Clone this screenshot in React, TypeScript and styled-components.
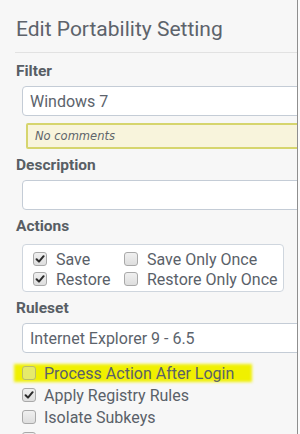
import React from "react";
import styled, { createGlobalStyle } from "styled-components";

const GlobalStyle = createGlobalStyle`
  html, body {
    margin: 0;
    padding: 0;
    background: #fbfbfb;
  }
  body {
    font-family: Roboto, "Liberation Sans", sans-serif;
  }
`;

interface iCheck {
  checked?: boolean;
}

const Check: React.FC<iCheck> = ({ checked }) => {
  return (
    <Box>
      {checked ? (
        <svg width="10" height="10" viewBox="0 0 10 10">
          <path
            d="M1.6 5.2 L4 7.6 L8.6 2.2"
            fill="none"
            stroke="#2b2b2b"
            strokeWidth="2"
            strokeLinecap="round"
            strokeLinejoin="round"
          />
        </svg>
      ) : null}
    </Box>
  );
};

const App: React.FC = () => {
  return (
    <>
      <GlobalStyle />
      <Panel>
        <Title>Edit Portability Setting</Title>
        <Rule />

        <Label style={{ marginTop: 10 }}>Filter</Label>
        <Field>Windows 7</Field>
        <Comment>No comments</Comment>

        <Label>Description</Label>
        <Field />

        <Label>Actions</Label>
        <ActionsBox>
          <Option>
            <Check checked />
            <span>Save</span>
          </Option>
          <Option>
            <Check />
            <span>Save Only Once</span>
          </Option>
          <Option>
            <Check checked />
            <span>Restore</span>
          </Option>
          <Option>
            <Check />
            <span>Restore Only Once</span>
          </Option>
        </ActionsBox>

        <Label>Ruleset</Label>
        <Field>Internet Explorer 9 - 6.5</Field>

        <CheckList>
          <Row marked>
            <Check />
            <span>Process Action After Login</span>
          </Row>
          <Row>
            <Check checked />
            <span>Apply Registry Rules</span>
          </Row>
          <Row>
            <Check />
            <span>Isolate Subkeys</span>
          </Row>
          <Row>
            <Check />
            <span></span>
          </Row>
        </CheckList>
      </Panel>
    </>
  );
};

export default App;

const Panel = styled.div`
  width: 281px;
  height: 417px;
  padding: 17px 0 0 16px;
  background-color: #f7f7f7;
  border-right: 1px solid #8f8f8f;
  overflow: hidden;
  color: #575d64;
`;

const Title = styled.h1`
  margin: 0;
  font-size: 21px;
  line-height: 24px;
  font-weight: 400;
  color: #5d636b;
  white-space: nowrap;
`;

const Rule = styled.div`
  margin: 11px 0 0 -1px;
  border-top: 1px solid #e2e2e2;
`;

const Label = styled.div`
  margin-top: 8px;
  font-size: 15.5px;
  line-height: 16px;
  font-weight: 700;
  color: #585e65;
`;

const Field = styled.div`
  box-sizing: border-box;
  margin: 7px 0 0 6px;
  width: 300px;
  height: 30px;
  padding-left: 7px;
  display: flex;
  align-items: center;
  background-color: #ffffff;
  border: 1px solid #c4ccd6;
  border-radius: 4px;
  font-size: 16px;
  color: #5c636c;
  white-space: nowrap;
`;

const Comment = styled.div`
  box-sizing: border-box;
  margin: 7px 0 0 10px;
  width: 300px;
  height: 26px;
  padding-left: 7px;
  display: flex;
  align-items: center;
  background-color: #f8f4dc;
  border: 2px solid #d6d56e;
  border-radius: 2px;
  font-family: "DejaVu Sans", Verdana, sans-serif;
  font-size: 11.5px;
  font-style: italic;
  color: #60656b;
`;

const ActionsBox = styled.div`
  box-sizing: border-box;
  margin: 10px 0 0 6px;
  width: 262px;
  height: 48px;
  padding: 4px 0 2px 10px;
  display: grid;
  grid-template-columns: 91px auto;
  grid-auto-rows: 20px;
  background-color: #ffffff;
  border: 1px solid #cfd6de;
  border-radius: 4px;
`;

const Option = styled.div`
  display: flex;
  align-items: center;
  gap: 9px;
  font-size: 16px;
  color: #5a6169;
  white-space: nowrap;
`;

const Box = styled.span`
  box-sizing: border-box;
  flex: none;
  width: 14px;
  height: 14px;
  display: flex;
  justify-content: center;
  align-items: center;
  border: 1px solid #a9a9a9;
  border-radius: 3px;
  background: linear-gradient(#f0f0f0, #dedede);
`;

const CheckList = styled.div`
  margin: 9px 0 0 6px;
  display: flex;
  flex-direction: column;
`;

const Row = styled.div<{ marked?: boolean }>`
  position: relative;
  height: 22px;
  display: flex;
  align-items: center;
  gap: 8px;
  font-size: 16px;
  color: #5a6169;
  white-space: nowrap;

  ${({ marked }) =>
    marked &&
    `
    &::before {
      content: "";
      position: absolute;
      left: -8px;
      width: 238px;
      top: 2px;
      height: 18px;
      background: #f0f000;
      filter: blur(1.5px);
      z-index: 0;
    }
    & > * {
      position: relative;
      z-index: 1;
    }
    & > span:first-child {
      background: #e6ea6a;
      border-color: #b9bc6a;
    }
  `}
`;
